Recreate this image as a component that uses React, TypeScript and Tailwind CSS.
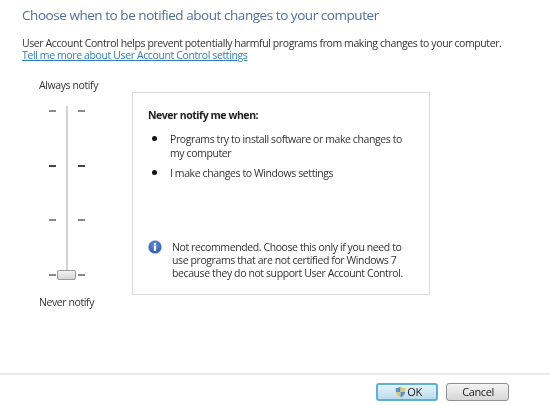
export default function App() {
  const ticks = [0, 1, 2, 3];
  return (
    <div className="w-[550px] h-[405px] bg-white flex flex-col overflow-hidden blur-[0.4px] text-[#333] text-[10.5px] leading-[12px] font-['Open_Sans',sans-serif] tracking-[-0.4px]">
      <div className="h-[373px] pl-[22px] flex flex-col">
        <h1 className="mt-[5px] text-[13.5px] leading-[20px] text-[#4f6f9a] tracking-[-0.45px]">Choose when to be notified about changes to your computer</h1>
        <p className="mt-[12px]">User Account Control helps prevent potentially harmful programs from making changes to your computer.</p>
        <a className="text-[#2f7fb8] underline tracking-[-0.38px]">Tell me more about User Account Control settings</a>
        <div className="mt-[18px] flex">
          <div className="w-[110px] flex flex-col">
            <span className="pl-[17px] h-[12px]">Always notify</span>
            <div className="relative ml-[27px] mt-[19px] w-[36px] h-[166px] flex justify-between">
              <div className="w-[7px] flex flex-col justify-between">
                {ticks.map((t) => <div key={t} className={t === 1 ? "h-[2px] bg-[#444]" : "h-[2px] bg-[#8a8a8a]"} />)}
              </div>
              <div className="w-[2px] -mt-[4px] mb-[2px] bg-[#d2d2d2]" />
              <div className="w-[7px] flex flex-col justify-between">
                {ticks.map((t) => <div key={t} className={t === 1 ? "h-[2px] bg-[#444]" : "h-[2px] bg-[#8a8a8a]"} />)}
              </div>
              <div className="absolute left-[8px] -bottom-[4px] w-[19px] h-[10px] rounded-[2px] border border-[#9a9a9a] bg-gradient-to-b from-[#f2f2f2] to-[#d4d4d4]" />
            </div>
            <span className="pl-[17px] mt-[20px]">Never notify</span>
          </div>
          <div className="mt-[13px] w-[298px] h-[203px] border border-[#dcdcdc] pl-[15px] pr-[24px] flex flex-col">
            <strong className="mt-[16px] font-bold text-[#222] tracking-[-0.45px]">Never notify me when:</strong>
            <ul className="mt-[11px] flex flex-col gap-[6px]">
              <li className="flex">
                <span className="w-[22px] pl-[4px] pt-[3.5px] shrink-0"><span className="block w-[5px] h-[5px] rounded-full bg-[#111]" /></span>
                <span className="leading-[14px]">Programs try to install software or make changes to my computer</span>
              </li>
              <li className="flex">
                <span className="w-[22px] pl-[4px] pt-[3.5px] shrink-0"><span className="block w-[5px] h-[5px] rounded-full bg-[#111]" /></span>
                <span className="leading-[14px]">I make changes to Windows settings</span>
              </li>
            </ul>
            <div className="mt-auto mb-[14px] flex gap-[10px]">
              <svg width="14" height="14" viewBox="0 0 14 14" className="shrink-0 mt-[-1px]">
                <defs>
                  <radialGradient id="ig" cx="50%" cy="40%" r="60%">
                    <stop offset="0%" stopColor="#6f9be0" />
                    <stop offset="100%" stopColor="#2c55a5" />
                  </radialGradient>
                </defs>
                <circle cx="7" cy="7" r="6.6" fill="url(#ig)" stroke="#b9c9e4" strokeWidth="0.6" />
                <circle cx="7" cy="3.8" r="1.1" fill="#fff" />
                <rect x="6" y="5.6" width="2" height="5.4" fill="#fff" />
              </svg>
              <p className="leading-[13px]">Not recommended. Choose this only if you need to use programs that are not certified for Windows 7 because they do not support User Account Control.</p>
            </div>
          </div>
        </div>
      </div>
      <div className="h-[2px] bg-[#e9e9e9]" />
      <div className="flex justify-end gap-[8px] pt-[8px] pr-[41px]">
        <button className="w-[62px] h-[18px] pl-[3px] rounded-[3px] border-2 border-[#5fb0d0] bg-gradient-to-b from-[#e6f3fa] to-[#bcdcec] flex items-center justify-center gap-[1px] text-[#222] text-[11px] font-['Open_Sans',sans-serif]">
          <svg width="11" height="12" viewBox="0 0 11 12">
            <path d="M5.5 0.5 L5.5 6 L0.8 6 L0.8 2 C2.5 2 4 1.5 5.5 0.5Z" fill="#5f8fc0" />
            <path d="M5.5 0.5 C7 1.5 8.5 2 10.2 2 L10.2 6 L5.5 6Z" fill="#d8c870" />
            <path d="M0.8 6 L5.5 6 L5.5 11.5 C3 10.5 1.2 8.5 0.8 6Z" fill="#d8c870" />
            <path d="M5.5 6 L10.2 6 C9.8 8.5 8 10.5 5.5 11.5Z" fill="#5f8fc0" />
          </svg>
          OK
        </button>
        <button className="w-[63px] h-[18px] pl-[1px] rounded-[3px] border border-[#8f8f8f] bg-gradient-to-b from-[#f4f4f4] to-[#d6d6d6] flex items-center justify-center text-[#222] text-[11px] font-['Open_Sans',sans-serif]">Cancel</button>
      </div>
    </div>
  );
}
